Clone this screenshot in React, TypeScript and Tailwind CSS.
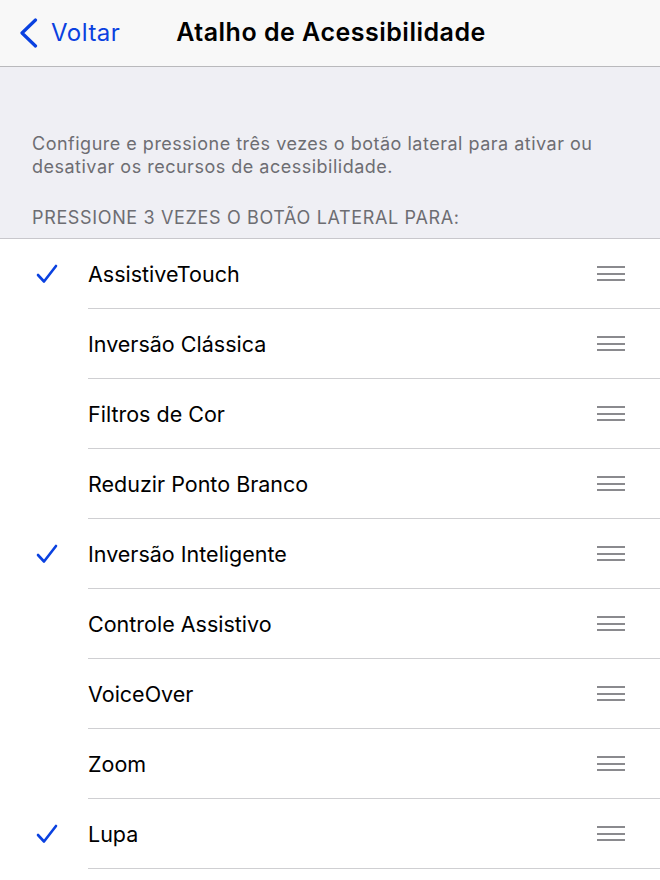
const items = [
  { label: "AssistiveTouch", on: true },
  { label: "Inversão Clássica", on: false },
  { label: "Filtros de Cor", on: false },
  { label: "Reduzir Ponto Branco", on: false },
  { label: "Inversão Inteligente", on: true },
  { label: "Controle Assistivo", on: false },
  { label: "VoiceOver", on: false },
  { label: "Zoom", on: false },
  { label: "Lupa", on: true },
]

function Check() {
  return (
    <svg width="22" height="22" viewBox="0 0 22 22" fill="none">
      <path d="M2 12 L8 18.5 L20 3" stroke="#0a41e0" strokeWidth="2.6" strokeLinecap="round" strokeLinejoin="round" />
    </svg>
  )
}

function Handle() {
  return (
    <div className="flex flex-col gap-[4.5px] w-[28px]">
      <div className="h-[2px] bg-[#8a8a8e]" />
      <div className="h-[2px] bg-[#8a8a8e]" />
      <div className="h-[2px] bg-[#8a8a8e]" />
    </div>
  )
}

export default function App() {
  return (
    <div className="w-[660px] h-[880px] bg-white overflow-hidden" style={{ fontFamily: "Inter, 'Noto Sans', sans-serif" }}>
      <div className="h-[67px] bg-[#f8f8f8] border-b border-[#b9b9bc] flex items-center relative">
        <div className="flex items-center pl-[19px] text-[#0a41e0]">
          <svg width="20" height="30" viewBox="0 0 20 30" fill="none">
            <path d="M16.5 2 L3 15 L16.5 28" stroke="#0a41e0" strokeWidth="3.2" strokeLinecap="round" strokeLinejoin="round" />
          </svg>
          <span className="text-[24px] tracking-[0.5px] ml-[12px]">Voltar</span>
        </div>
        <div className="absolute left-0 right-0 text-center text-[25px] tracking-[0.5px] font-semibold text-black pointer-events-none pl-[2px]">
          Atalho de Acessibilidade
        </div>
      </div>
      <div className="bg-[#efeff4] border-b border-[#c8c7cc] px-[32px] pt-[65px] pb-[9px] text-[#6d6d72]">
        <p className="text-[18px] tracking-[0.5px] leading-[23px]">
          Configure e pressione três vezes o botão lateral para ativar ou desativar os recursos de acessibilidade.
        </p>
        <p className="text-[18px] tracking-[0.65px] leading-[23px] mt-[28px] uppercase">
          Pressione 3 vezes o botão lateral para:
        </p>
      </div>
      <div>
        {items.map((it) => (
          <div key={it.label} className="flex h-[70px]">
            <div className="w-[88px] flex items-center pl-[36px]">
              {it.on && <Check />}
            </div>
            <div className="flex-1 flex items-center justify-between pr-[35px] border-b border-[#cfcfd2]">
              <span className="text-[21.5px] text-black pt-[1px]">{it.label}</span>
              <Handle />
            </div>
          </div>
        ))}
      </div>
    </div>
  )
}
